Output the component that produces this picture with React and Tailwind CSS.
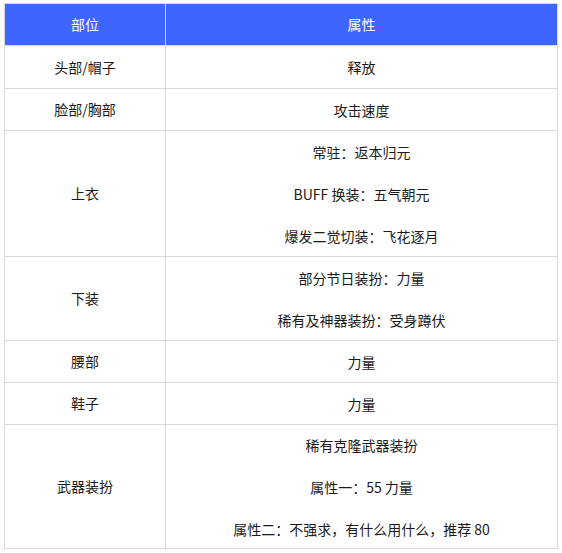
import React from "react";

const rows = [
  { part: "头部/帽子", attrs: ["释放"], h: "h-[43px]" },
  { part: "脸部/胸部", attrs: ["攻击速度"], h: "h-[42px]" },
  { part: "上衣", attrs: ["常驻：返本归元", "BUFF 换装：五气朝元", "爆发二觉切装：飞花逐月"], h: "h-[126px]" },
  { part: "下装", attrs: ["部分节日装扮：力量", "稀有及神器装扮：受身蹲伏"], h: "h-[84px]" },
  { part: "腰部", attrs: ["力量"], h: "h-[42px]" },
  { part: "鞋子", attrs: ["力量"], h: "h-[42px]" },
  { part: "武器装扮", attrs: ["稀有克隆武器装扮", "属性一：55 力量", "属性二：不强求，有什么用什么，推荐 80"], h: "h-[124px]" },
];

export default function App() {
  return (
    <div
      className="w-[562px] h-[553px] bg-white pt-[3px] pl-[4px] text-[14px] text-[#1a1a1a]"
      style={{ fontFamily: '"Noto Sans CJK SC", "Noto Sans", sans-serif' }}
    >
      <div className="w-[554px] border border-[#d9d9d9]">
        <div className="flex h-[41px] bg-[#3e66fe] text-white">
          <div className="w-[161px] border-r border-[#c9d4ff] flex items-center justify-center">部位</div>
          <div className="flex-1 flex items-center justify-center">属性</div>
        </div>
        {rows.map((r, i) => (
          <div key={i} className={`flex border-t border-[#d9d9d9] ${r.h}`}>
            <div className="w-[161px] border-r border-[#d9d9d9] flex items-center justify-center">{r.part}</div>
            <div className="flex-1 flex flex-col items-center justify-center gap-[20px]">
              {r.attrs.map((a, j) => (
                <div key={j} className="h-[22px] leading-[22px]">{a}</div>
              ))}
            </div>
          </div>
        ))}
      </div>
    </div>
  );
}
